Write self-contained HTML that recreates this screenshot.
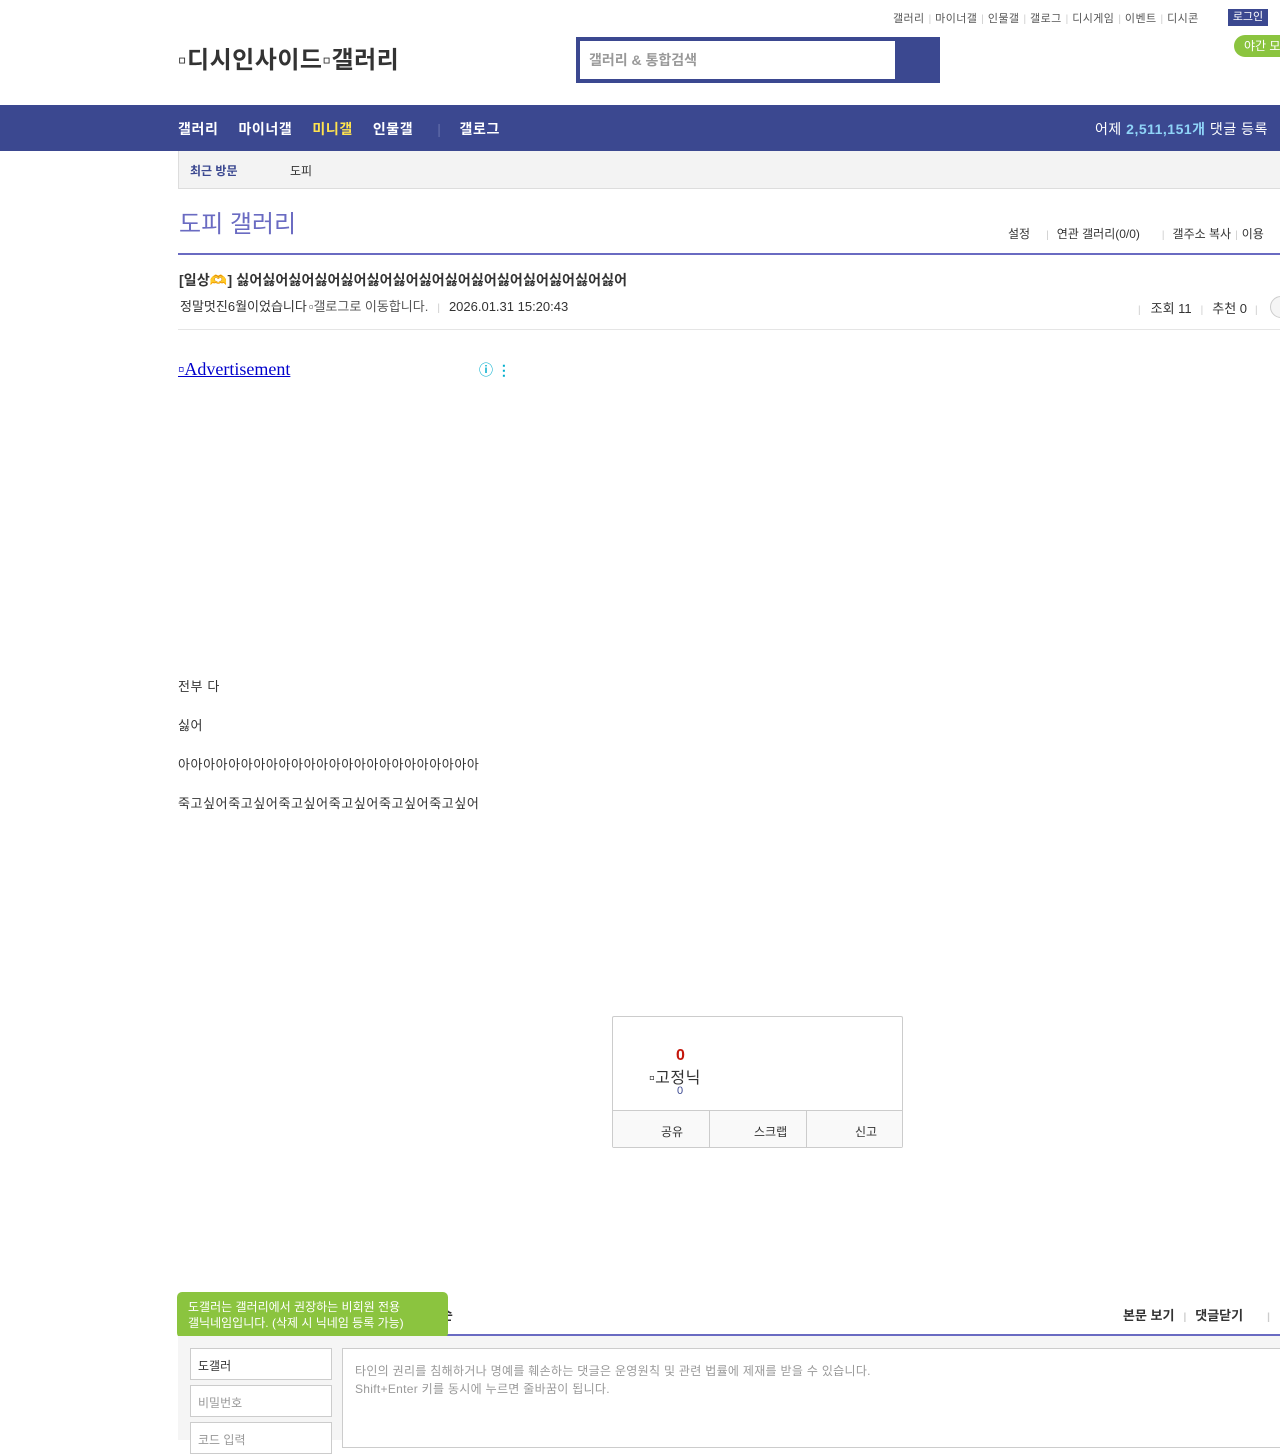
<!DOCTYPE html>
<html><head><meta charset="utf-8"><style>
*{margin:0;padding:0;box-sizing:border-box}
body{width:1280px;height:1440px;overflow:hidden;background:#fff;font-family:"Liberation Sans","Noto Sans CJK KR",sans-serif;color:#333;position:relative;font-size:12px}
.a{position:absolute;white-space:nowrap}
.top a{color:#555;font-size:11px;text-decoration:none;letter-spacing:0.4px}
.sep{color:#ccc;margin:0 4px;font-size:10px}
</style></head><body>
<div class="a top" style="left:893px;top:10px"><a>갤러리</a><span class="sep">|</span><a>마이너갤</a><span class="sep">|</span><a>인물갤</a><span class="sep">|</span><a>갤로그</a><span class="sep">|</span><a>디시게임</a><span class="sep">|</span><a>이벤트</a><span class="sep">|</span><a>디시콘</a></div>
<div class="a" style="left:1228px;top:9px;width:40px;height:17px;background:#3b4890;color:#fff;font-size:11px;text-align:center;line-height:17px">로그인</div>
<div class="a" style="left:1234px;top:35px;width:60px;height:22px;background:#8bc43f;border-radius:11px;color:#fff;font-size:12px;line-height:22px;padding-left:10px">야간 모드</div>
<div class="a" style="left:178px;top:40px;font-size:24px;font-weight:bold;color:#333;letter-spacing:0.5px">▫디시인사이드▫갤러리</div>
<div class="a" style="left:576px;top:37px;width:364px;height:46px;background:#3b4890"></div>
<div class="a" style="left:580px;top:41px;width:315px;height:38px;background:#fff;color:#999;font-size:14px;font-weight:bold;line-height:38px;padding-left:9px">갤러리 &amp; 통합검색</div>
<div class="a" style="left:0;top:105px;width:1280px;height:46px;background:#3b4890"></div>
<div class="a" style="left:178px;top:119px;color:#fff;font-size:14px;font-weight:bold;letter-spacing:0.6px">갤러리<span style="margin-left:20px">마이너갤</span><span style="margin-left:20px;color:#ffe34e">미니갤</span><span style="margin-left:20px">인물갤</span><span style="margin-left:24px;color:#6670ad;font-weight:normal">|</span><span style="margin-left:18px">갤로그</span></div>
<div class="a" style="left:1095px;top:119px;color:#fff;font-size:14px;letter-spacing:0.5px">어제 <b style="color:#8fd4f8">2,511,151개</b> 댓글 등록</div>
<div class="a" style="left:178px;top:151px;width:1102px;height:38px;background:#f3f3f3;border-left:1px solid #ddd;border-bottom:1px solid #ddd"></div>
<div class="a" style="left:190px;top:162px;color:#3b4890;font-size:12px;font-weight:bold">최근 방문</div>
<div class="a" style="left:290px;top:162px;color:#333;font-size:12px">도피</div>
<div class="a" style="left:179px;top:204px;color:#6a6bc2;font-size:24px">도피 갤러리</div>
<div class="a" style="left:1008px;top:225px;color:#333;font-size:12px">설정<span class="sep" style="margin:0 8px 0 16px">|</span>연관 갤러리(0/0)<span class="sep" style="margin:0 8px 0 22px">|</span>갤주소 복사<span class="sep">|</span>이용</div>
<div class="a" style="left:178px;top:253px;width:1102px;height:2px;background:#6a6bc2"></div>
<div class="a" style="left:179px;top:270px;font-size:14px;font-weight:bold;color:#333;letter-spacing:0.15px">[일상🫶] 싫어싫어싫어싫어싫어싫어싫어싫어싫어싫어싫어싫어싫어싫어싫어</div>
<div class="a" style="left:180px;top:296px;font-size:13px;color:#333">정말멋진6월이었습니다<span style="color:#555;margin-left:2px">▫갤로그로 이동합니다.</span><span class="sep" style="margin:0 9px">|</span><span style="font-size:13px">2026.01.31 15:20:43</span></div>
<div class="a" style="left:1134px;top:298px;font-size:13px"><span class="sep" style="margin-right:10px">|</span>조회 11<span class="sep" style="margin:0 9px">|</span>추천 0<span class="sep" style="margin:0 8px">|</span></div>
<div class="a" style="left:1270px;top:296px;width:24px;height:22px;border:1px solid #ccc;border-radius:11px;background:#f5f5f5"></div>
<div class="a" style="left:178px;top:329px;width:1102px;height:1px;background:#e5e5e5"></div>
<div class="a" style="left:178px;top:359px;font-family:'Liberation Serif',serif;font-size:18px;color:#00c;text-decoration:underline">▫Advertisement</div>
<div class="a" style="left:479px;top:360px;color:#00aecd;font-size:14px;font-weight:bold">ⓘ ⋮</div>
<div class="a" style="left:178px;top:667px;font-size:13px;line-height:39px;color:#333;white-space:normal;letter-spacing:0.6px">전부 다<br>싫어<br>아아아아아아아아아아아아아아아아아아아아아아아아<br>죽고싶어죽고싶어죽고싶어죽고싶어죽고싶어죽고싶어</div>
<div class="a" style="left:612px;top:1016px;width:291px;height:132px;border:1px solid #ccc;border-radius:2px"></div>
<div class="a" style="left:676px;top:1047px;color:#c4170c;font-size:16px;font-weight:bold">0</div>
<div class="a" style="left:649px;top:1064px;color:#333;font-size:16px;letter-spacing:0.5px">▫고정닉</div>
<div class="a" style="left:677px;top:1085px;color:#3b4890;font-size:11px">0</div>
<div class="a" style="left:613px;top:1110px;width:289px;height:37px;background:#f9f9f9;border-top:1px solid #ccc"></div>
<div class="a" style="left:709px;top:1110px;width:1px;height:37px;background:#ccc"></div>
<div class="a" style="left:806px;top:1110px;width:1px;height:37px;background:#ccc"></div>
<div class="a" style="left:661px;top:1123px;font-size:12px;color:#333">공유</div>
<div class="a" style="left:754px;top:1123px;font-size:12px;color:#333">스크랩</div>
<div class="a" style="left:855px;top:1123px;font-size:12px;color:#333">신고</div>
<div class="a" style="left:440px;top:1305px;font-size:14px;font-weight:bold">순</div>
<div class="a" style="left:1123px;top:1305px;font-size:13px;font-weight:bold;color:#333">본문 보기<span class="sep" style="margin:0 9px">|</span>댓글닫기<span class="sep" style="margin-left:24px">|</span></div>
<div class="a" style="left:178px;top:1334px;width:1102px;height:2px;background:#6a6bc2"></div>
<div class="a" style="left:177px;top:1292px;width:271px;height:46px;background:#8bc43f;border-radius:5px;color:#fff;font-size:12px;line-height:16px;padding:7px 11px;white-space:normal"><div style="width:240px">도갤러는 갤러리에서 권장하는 비회원 전용<br>갤닉네임입니다. (삭제 시 닉네임 등록 가능)</div></div>
<div class="a" style="left:210px;top:1338px;width:0;height:0;border-left:6px solid transparent;border-right:6px solid transparent;border-top:7px solid #8bc43f"></div>
<div class="a" style="left:178px;top:1336px;width:1102px;height:104px;background:#f5f5f5"></div>
<div class="a" style="left:190px;top:1348px;width:142px;height:32px;background:#fff;border:1px solid #ccc;padding:8px 7px;font-size:12px;color:#333">도갤러</div>
<div class="a" style="left:190px;top:1385px;width:142px;height:32px;background:#fff;border:1px solid #ccc;padding:8px 7px;font-size:12px;color:#999">비밀번호</div>
<div class="a" style="left:190px;top:1422px;width:142px;height:32px;background:#fff;border:1px solid #ccc;padding:8px 7px;font-size:12px;color:#999">코드 입력</div>
<div class="a" style="left:342px;top:1348px;width:940px;height:100px;background:#fff;border:1px solid #ccc;padding:13px 12px;font-size:12px;color:#999;line-height:18px;white-space:normal;letter-spacing:0.3px">타인의 권리를 침해하거나 명예를 훼손하는 댓글은 운영원칙 및 관련 법률에 제재를 받을 수 있습니다.<br>Shift+Enter 키를 동시에 누르면 줄바꿈이 됩니다.</div>
</body></html>
